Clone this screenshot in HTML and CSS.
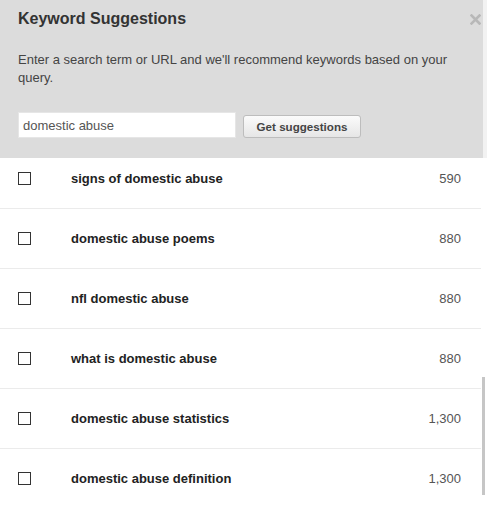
FILE: index.html
```html
<!DOCTYPE html>
<html>
<head>
<meta charset="utf-8">
<link rel="stylesheet" href="styles.css">
</head>
<body>
<div class="panel">
  <div class="header">
    <div class="title-row">
      <h2 class="title">Keyword Suggestions</h2>
      <svg class="close" width="11" height="11" viewBox="0 0 11 11"><path d="M1.5 1.5 L9.5 9.5 M9.5 1.5 L1.5 9.5" stroke="#b8b8b8" stroke-width="2.6" stroke-linecap="square"/></svg>
    </div>
    <p class="desc">Enter a search term or URL and we'll recommend keywords based on your query.</p>
    <div class="form">
      <div class="input">domestic abuse</div>
      <button class="btn">Get suggestions</button>
    </div>
  </div>
  <div class="viewport">
    <div class="list">
      <div class="row"><span class="cb"></span><span class="kw">signs of domestic abuse</span><span class="num">590</span></div>
      <div class="row"><span class="cb"></span><span class="kw">domestic abuse poems</span><span class="num">880</span></div>
      <div class="row"><span class="cb"></span><span class="kw">nfl domestic abuse</span><span class="num">880</span></div>
      <div class="row"><span class="cb"></span><span class="kw">what is domestic abuse</span><span class="num">880</span></div>
      <div class="row"><span class="cb"></span><span class="kw">domestic abuse statistics</span><span class="num">1,300</span></div>
      <div class="row"><span class="cb"></span><span class="kw">domestic abuse definition</span><span class="num">1,300</span></div>
    </div>
    <div class="thumb"></div>
  </div>
</div>
</body>
</html>
```

FILE: styles.css
```css
html, body {
  margin: 0;
  padding: 0;
  background: #fff;
  font-family: "Liberation Sans", Arial, sans-serif;
}
.panel {
  width: 487px;
  height: 511px;
  overflow: hidden;
  display: flex;
  flex-direction: column;
}
.header {
  background: #dcdcdc;
  height: 158px;
  box-sizing: border-box;
  padding: 9px 0 0 18px;
  border-right: 4px solid #f2f2f2;
  width: 487px;
  flex: none;
}
.title-row {
  display: flex;
  justify-content: space-between;
  align-items: center;
}
.title {
  margin: 0;
  font-size: 16px;
  font-weight: bold;
  color: #333;
  line-height: 20px;
}
.close {
  display: block;
  margin-right: 2px;
  margin-top: 1px;
}
.desc {
  margin: 22px 0 0;
  font-size: 13px;
  line-height: 18px;
  color: #444;
  width: 460px;
}
.form {
  display: flex;
  align-items: center;
  margin-top: 25px;
  gap: 7px;
}
.input {
  width: 218px;
  height: 26px;
  box-sizing: border-box;
  background: #fff;
  border: 1px solid #e6e6e6;
  font-size: 13px;
  color: #555;
  padding: 5px 4px;
  line-height: 15px;
}
.btn {
  height: 23px;
  width: 118px;
  box-sizing: border-box;
  margin-top: 2px;
  border: 1px solid #bdbdbd;
  border-radius: 3px;
  background: linear-gradient(#fbfbfb, #e6e6e6);
  font-family: "Liberation Sans", Arial, sans-serif;
  font-size: 11.6px;
  font-weight: bold;
  color: #444;
  padding: 0;
}
.viewport {
  position: relative;
  flex: 1;
  overflow: hidden;
}
.list {
  margin-top: -9px;
  width: 481px;
}
.row {
  height: 60px;
  box-sizing: border-box;
  border-bottom: 1px solid #ebebeb;
  display: flex;
  align-items: center;
  padding: 0 20px 0 18px;
}
.row:last-child {
  border-bottom-color: transparent;
}
.cb {
  width: 11px;
  height: 11px;
  border: 1px solid #333;
  flex: none;
}
.kw {
  margin-left: 40px;
  font-size: 13px;
  font-weight: bold;
  color: #222;
  flex: 1;
}
.num {
  font-size: 13px;
  color: #555;
}
.thumb {
  position: absolute;
  right: 2px;
  top: 219px;
  width: 3px;
  height: 118px;
  background: #c6c6c6;
}
```
